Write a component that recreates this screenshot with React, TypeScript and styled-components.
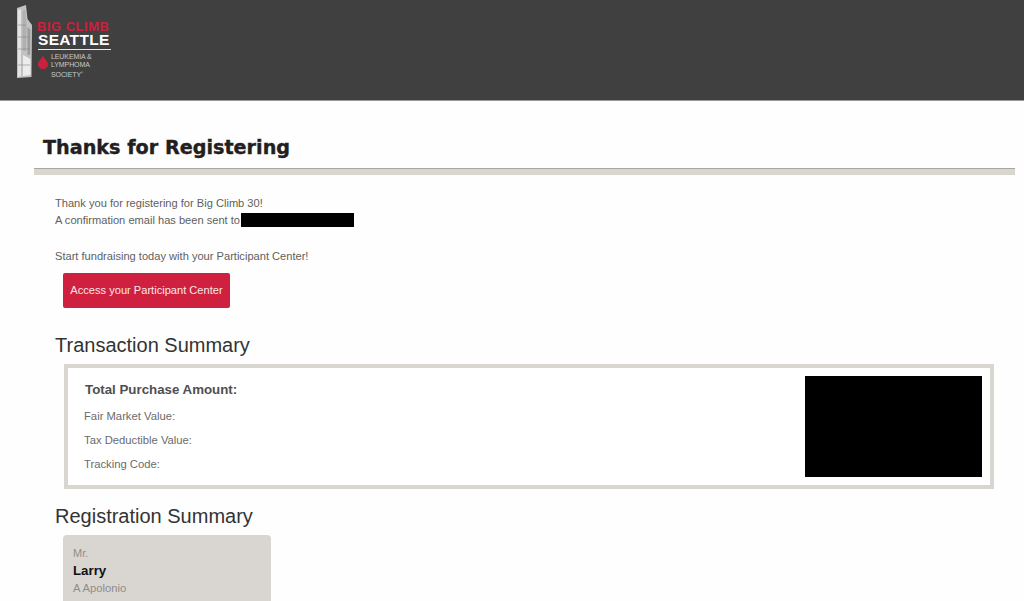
import React from "react";
import styled, { createGlobalStyle } from "styled-components";

const Global = createGlobalStyle`
  html, body { margin: 0; padding: 0; height: 601px; overflow: hidden; background: #fefefe; }
  body { font-family: "Liberation Sans", Arial, sans-serif; color: #5e5e60; }
`;
const Header = styled.header`
  height: 101px;
  background: #404041;
  border-bottom: 1px solid #9a9a9a;
  box-sizing: border-box;
  padding: 5px 0 0 16px;
`;
const Logo = styled.div`
  display: flex;
  gap: 4px;
`;
const LogoText = styled.div`
  display: flex;
  flex-direction: column;
  width: 73px;
  padding-top: 15px;
`;
const BigClimb = styled.div`
  font-size: 13px;
  line-height: 14px;
  font-weight: 700;
  color: #c9213e;
  white-space: nowrap;
  letter-spacing: 0.5px;
  margin-left: -1px;
`;
const Seattle = styled.div`
  font-size: 15.5px;
  line-height: 12px;
  font-weight: 700;
  color: #fff;
  letter-spacing: 0.3px;
  padding-bottom: 3px;
  border-bottom: 1px solid #e8e8e8;
  white-space: nowrap;
`;
const Lls = styled.div`
  display: flex;
  gap: 3px;
  margin-top: 5px;
  align-items: flex-start;
`;
const LlsText = styled.div`
  font-size: 7px;
  line-height: 8px;
  margin-top: -2px;
  color: #c9c9c9;
  white-space: nowrap;
  letter-spacing: -0.1px;
`;
const Registered = styled.sup`
  font-size: 3px;
`;
const Main = styled.main`
  padding: 0 9px 0 34px;
`;
const TitleBar = styled.div`
  height: 68px;
  box-sizing: border-box;
  padding: 34px 0 0 9px;
  border-bottom: 1px solid #a8a69e;
`;
const Title = styled.h1`
  margin: 0;
  font-family: "DejaVu Sans", Verdana, sans-serif;
  font-size: 19.2px;
  line-height: 26px;
  font-weight: 700;
  color: #231f20;
  -webkit-text-stroke: 0.4px #231f20;
`;
const Rule = styled.div`
  height: 6px;
  background: #d9d6d0;
`;
const Content = styled.div`
  padding: 20px 0 0 21px;
`;
const Para = styled.p`
  margin: 0;
  font-size: 11.1px;
  line-height: 17px;
  color: #5e5e60;
`;
const Spaced = styled(Para)`
  margin-top: 19px;
`;
const Redacted = styled.span`
  display: inline-block;
  width: 113px;
  height: 14px;
  background: #000;
  vertical-align: -3px;
  margin-left: 1px;
`;
const Button = styled.a`
  display: block;
  width: 167px;
  height: 35px;
  margin: 8px 0 0 8px;
  background: #cf213f;
  border-radius: 2px;
  color: #fbe6ea;
  font-size: 11.1px;
  line-height: 35px;
  text-align: center;
`;
const Heading = styled.h2`
  margin: 0;
  font-size: 20px;
  line-height: 24px;
  font-weight: 400;
  color: #333;
`;
const TransactionHeading = styled(Heading)`
  margin-top: 25px;
`;
const RegistrationHeading = styled(Heading)`
  margin-top: 15px;
`;
const SummaryBox = styled.section`
  display: flex;
  justify-content: space-between;
  box-sizing: border-box;
  width: 930px;
  height: 125px;
  margin: 7px 0 0 9px;
  padding: 8px;
  border: 4px solid #d9d6d0;
  background: #fff;
`;
const Details = styled.div`
  padding: 6px 0 0 8px;
`;
const Total = styled.div`
  font-size: 13.3px;
  line-height: 16px;
  font-weight: 700;
  color: #4f4f51;
  margin: 0 0 11px 1px;
`;
const Detail = styled.div`
  font-size: 11.25px;
  line-height: 14px;
  color: #6b6b6b;
  margin-bottom: 10px;
`;
const BlackBlock = styled.div`
  width: 177px;
  height: 101px;
  background: #000;
`;
const Card = styled.div`
  width: 208px;
  height: 100px;
  margin: 7px 0 0 8px;
  box-sizing: border-box;
  padding: 11px 10px;
  border-radius: 4px;
  background: #d9d6d2;
`;
const Honorific = styled.div`
  font-size: 11px;
  line-height: 14px;
  color: #8f8d8a;
`;
const FirstName = styled.div`
  font-size: 13.3px;
  line-height: 21px;
  font-weight: 700;
  color: #111;
`;
const LastName = styled.div`
  font-size: 11.25px;
  line-height: 15px;
  color: #8f8d8a;
`;

export default function App() {
  return (
    <>
      <Global />
      <Header>
        <Logo>
          <svg width="18" height="74" viewBox="0 0 18 74" aria-hidden>
            <path d="M1 3 L10 0 L11.5 14 L16 20 L15.5 72 L1 73 Z" fill="#c2c2c2" />
            <path d="M2 5 L5 4 L5 71 L2 72 Z" fill="#e4e4e4" />
            <path d="M6.5 6 L9.5 5 L10.5 20 L10 46 L6.5 46 Z" fill="#b0b0b0" />
            <path d="M11.5 22 L14.5 25 L14 50 L11.5 50 Z" fill="#9c9c9c" />
            <path d="M7 50 L14.5 54 L14.5 70 L7 71 Z" fill="#ececec" />
            <path d="M2 20 H10 M2 32 H14 M2 44 H14 M2 60 H14" stroke="#8c8c8c" strokeWidth="0.6" />
          </svg>
          <LogoText>
            <BigClimb>BIG CLIMB</BigClimb>
            <Seattle>SEATTLE</Seattle>
            <Lls>
              <svg width="10" height="14" viewBox="0 0 10 14" aria-hidden>
                <path d="M5 0 C6 4 10 6 10 9.5 C10 12 8 14 5 14 C2 14 0 12 0 9.5 C0 6 4 4 5 0 Z" fill="#c9213e" />
              </svg>
              <LlsText>
                LEUKEMIA &amp;<br />LYMPHOMA<br />SOCIETY<Registered>®</Registered>
              </LlsText>
            </Lls>
          </LogoText>
        </Logo>
      </Header>
      <Main>
        <TitleBar>
          <Title>Thanks for Registering</Title>
        </TitleBar>
        <Rule />
        <Content>
          <Para>Thank you for registering for Big Climb 30!</Para>
          <Para>
            A confirmation email has been sent to<Redacted />
          </Para>
          <Spaced>Start fundraising today with your Participant Center!</Spaced>
          <Button>Access your Participant Center</Button>
          <TransactionHeading>Transaction Summary</TransactionHeading>
          <SummaryBox>
            <Details>
              <Total>Total Purchase Amount:</Total>
              <Detail>Fair Market Value:</Detail>
              <Detail>Tax Deductible Value:</Detail>
              <Detail>Tracking Code:</Detail>
            </Details>
            <BlackBlock />
          </SummaryBox>
          <RegistrationHeading>Registration Summary</RegistrationHeading>
          <Card>
            <Honorific>Mr.</Honorific>
            <FirstName>Larry</FirstName>
            <LastName>A Apolonio</LastName>
          </Card>
        </Content>
      </Main>
    </>
  );
}
